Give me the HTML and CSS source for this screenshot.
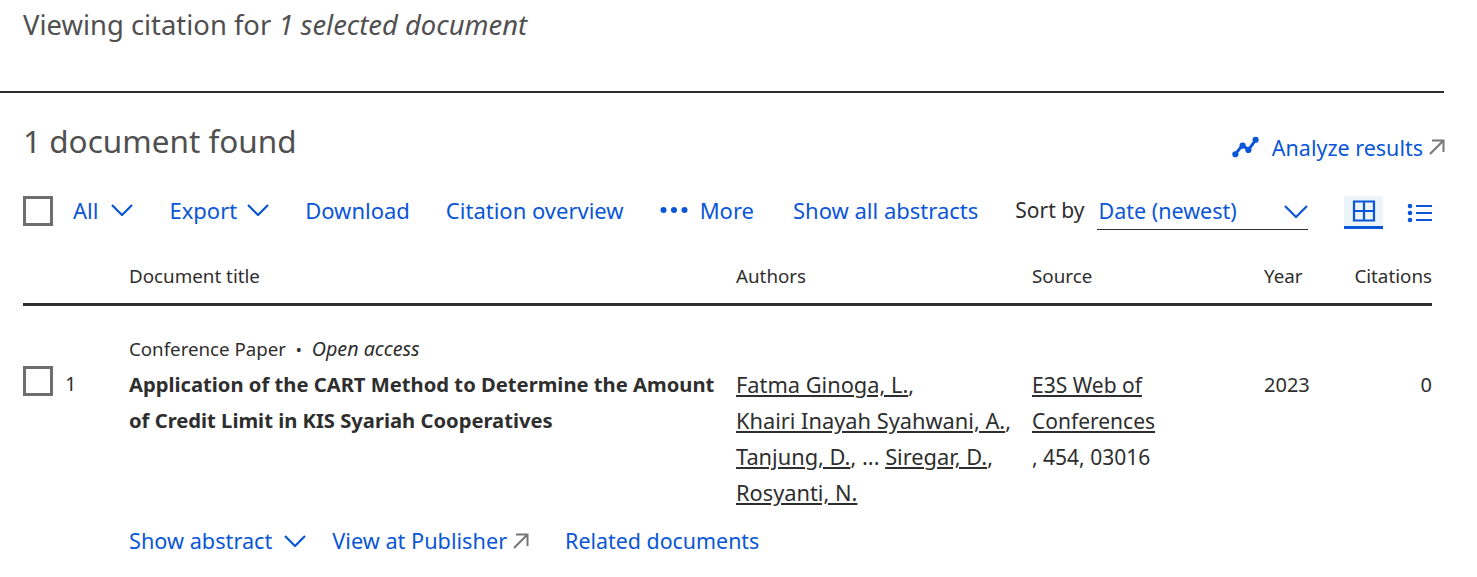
FILE: index.html
```html
<!DOCTYPE html>
<html lang="en">
<head>
    <meta charset="UTF-8">
    <title>Scopus - Document search results</title>
    <link rel="stylesheet" href="styles.css">
</head>
<body>
    <div class="viewing">Viewing citation for <em>1 selected document</em></div>

    <div class="results">
        <div class="results-head">
            <h1>1 document found</h1>
            <a href="#" class="analyze">
                <svg class="ico-analyze" width="27" height="24" viewBox="0 0 28 24"><path d="M3 20 L11 10 L17 15 L25 4" fill="none" stroke="#0a56d8" stroke-width="3"/><circle cx="3.5" cy="19.5" r="3.2" fill="#0a56d8"/><circle cx="11" cy="10.5" r="3.2" fill="#0a56d8"/><circle cx="17" cy="15" r="3.2" fill="#0a56d8"/><circle cx="24.5" cy="4.5" r="3.2" fill="#0a56d8"/></svg>
                <span>Analyze results</span>
                <svg class="ico-out" width="16" height="16" viewBox="0 0 16 16"><path d="M1 15 L14.5 1.5 M3 1.5 H14.5 V13" fill="none" stroke="#767676" stroke-width="2"/></svg>
            </a>
        </div>

        <div class="toolbar">
            <span class="checkbox"></span>
            <a href="#" class="tool t-all">All <svg class="chev" width="22" height="12" viewBox="0 0 22 12"><path d="M1 1 L11 11 L21 1" fill="none" stroke="#0a56d8" stroke-width="2.2"/></svg></a>
            <a href="#" class="tool t-export">Export <svg class="chev" width="22" height="12" viewBox="0 0 22 12"><path d="M1 1 L11 11 L21 1" fill="none" stroke="#0a56d8" stroke-width="2.2"/></svg></a>
            <a href="#" class="tool t-download">Download</a>
            <a href="#" class="tool t-overview">Citation overview</a>
            <a href="#" class="tool t-more"><svg width="28" height="8" viewBox="0 0 28 8"><circle cx="3.5" cy="4" r="3" fill="#0a56d8"/><circle cx="14" cy="4" r="3" fill="#0a56d8"/><circle cx="24.5" cy="4" r="3" fill="#0a56d8"/></svg> More</a>
            <a href="#" class="tool t-abstracts">Show all abstracts</a>
            <span class="sort-label">Sort by</span>
            <div class="sort-select">
                <span>Date (newest)</span>
                <svg width="24" height="13" viewBox="0 0 24 13"><path d="M1 1 L12 12 L23 1" fill="none" stroke="#0a56d8" stroke-width="2.2"/></svg>
            </div>
            <div class="view-btn active">
                <svg width="24" height="22" viewBox="0 0 24 22"><path d="M2 1.5 H22 V20.5 H2 Z M12 1.5 V20.5 M2 11 H22" fill="none" stroke="#0a56d8" stroke-width="2.2"/></svg>
            </div>
            <div class="view-btn">
                <svg width="26" height="20" viewBox="0 0 26 20"><circle cx="3" cy="3" r="2.3" fill="#0a56d8"/><circle cx="3" cy="10" r="2.3" fill="#0a56d8"/><circle cx="3" cy="17" r="2.3" fill="#0a56d8"/><path d="M9 3 H25 M9 10 H25 M9 17 H25" stroke="#0a56d8" stroke-width="2.2"/></svg>
            </div>
        </div>

        <div class="row table-head">
            <div></div>
            <div>Document title</div>
            <div>Authors</div>
            <div>Source</div>
            <div>Year</div>
            <div class="right">Citations</div>
        </div>

        <div class="doc-meta">Conference Paper <span class="dot">•</span> <em>Open access</em></div>
        <div class="row doc">
            <div class="doc-num"><span class="checkbox"></span><span>1</span></div>
            <div class="doc-title">Application of the CART Method to Determine the Amount of Credit Limit in KIS Syariah Cooperatives</div>
            <div class="authors"><a href="#">Fatma Ginoga, L.</a>,<br><a href="#">Khairi Inayah Syahwani, A.</a>,<br><a href="#">Tanjung, D.</a>, ... <a href="#">Siregar, D.</a>,<br><a href="#">Rosyanti, N.</a></div>
            <div class="source"><a href="#">E3S Web of<br>Conferences</a><br>, 454, 03016</div>
            <div class="year">2023</div>
            <div class="right year">0</div>
        </div>

        <div class="doc-links">
            <a href="#" class="l-abstract">Show abstract <svg class="chev" width="22" height="12" viewBox="0 0 22 12"><path d="M1 1 L11 11 L21 1" fill="none" stroke="#0a56d8" stroke-width="2.2"/></svg></a>
            <a href="#" class="l-publisher">View at Publisher <svg width="16" height="16" viewBox="0 0 16 16"><path d="M1 15 L14.5 1.5 M3 1.5 H14.5 V13" fill="none" stroke="#767676" stroke-width="2"/></svg></a>
            <a href="#" class="l-related">Related documents</a>
        </div>
    </div>
</body>
</html>
```

FILE: styles.css
```css
body {
    font-family: "Noto Sans", sans-serif;
    color: #2e2e2e;
    background-color: #fff;
    margin: 0;
    height: 577px;
    overflow: hidden;
}

a {
    color: #0a56d8;
    text-decoration: none;
}

/* Top line */
.viewing {
    box-sizing: border-box;
    width: 1444px;
    height: 93px;
    padding: 7px 0 0 23px;
    font-size: 27.4px;
    line-height: 36px;
    color: #505050;
    border-bottom: 2px solid #2e2e2e;
}

.results {
    width: 1409px;
    padding: 0 0 0 23px;
}

/* Heading */
.results-head {
    height: 103px;
    display: flex;
    justify-content: space-between;
}

.results-head h1 {
    margin: 25px 0 0;
    font-size: 31.5px;
    line-height: 46px;
    font-weight: 400;
    color: #505050;
}

.analyze {
    display: flex;
    align-items: center;
    height: 30px;
    margin: 39px -13px 0 0;
    font-size: 21.5px;
}

.ico-analyze { margin-right: 13px; }
.ico-out { margin-left: 6px; }

/* Toolbar */
.toolbar {
    height: 61px;
    display: flex;
    align-items: flex-start;
    font-size: 22px;
    line-height: 28px;
}

.checkbox {
    display: block;
    width: 30px;
    height: 30px;
    box-sizing: border-box;
    border: 3px solid #6e6e6e;
    flex: none;
}

.tool { white-space: nowrap; display: flex; align-items: center; }
.tool svg { margin-left: 13px; }
.t-all { margin-left: 20px; }
.t-export { margin-left: 36px; }
.t-export svg { margin-left: 10px; }
.t-download { margin-left: 36px; }
.t-overview { margin-left: 36px; }
.t-more { margin-left: 36px; }
.t-more svg { margin: 0 12px 0 0; }
.t-abstracts { margin-left: 39px; }

.sort-label {
    margin-left: 37px;
    color: #2e2e2e;
    font-size: 21px;
    white-space: nowrap;
}

.sort-select {
    margin-left: 13px;
    width: 211px;
    height: 34px;
    box-sizing: border-box;
    border-bottom: 1px solid #2e2e2e;
    padding: 0 0 3px 1px;
    display: flex;
    justify-content: space-between;
    align-items: center;
    color: #0a56d8;
    font-size: 21.5px;
    flex: none;
}

.view-btn {
    width: 39px;
    height: 33px;
    box-sizing: border-box;
    display: flex;
    align-items: center;
    justify-content: center;
    margin-left: 36px;
    flex: none;
}

.view-btn.active {
    background-color: #ecf3f9;
    border-bottom: 3px solid #0a56d8;
}

.view-btn:last-child { margin-left: 17px; }

/* Table */
.row {
    display: grid;
    grid-template-columns: 106px 607px 296px 232px 70px 98px;
}

.table-head {
    font-size: 18.8px;
    line-height: 24px;
    height: 49px;
    box-sizing: border-box;
    padding-top: 7px;
    border-bottom: 3px solid #2e2e2e;
}

.right { text-align: right; }

.doc-meta {
    margin: 30px 0 0 106px;
    font-size: 18.7px;
    line-height: 26px;
}

.doc-meta em { font-size: 19.7px; }

.dot { margin: 0 5px; font-size: 16px; }

.doc {
    font-size: 20px;
    line-height: 36px;
    margin-top: 3px;
}

.doc-num {
    display: flex;
    gap: 12px;
}

.doc-num .checkbox { margin-top: 0; }

.doc-title {
    font-weight: 700;
    font-size: 20.2px;
    padding-right: 10px;
}

.authors { font-size: 21.8px; margin-top: 1px; }
.source { font-size: 21px; margin-top: 1px; }
.year { margin-top: 1px; }

.authors a,
.source a {
    color: #2e2e2e;
    text-decoration: underline;
}

/* Links under the row */
.doc-links {
    margin: 0 0 0 106px;
    padding-top: 12px;
    display: flex;
    font-size: 21.7px;
    line-height: 36px;
}

.doc-links a { display: flex; align-items: center; }
.doc-links svg { margin-left: 12px; }
.l-abstract { margin-right: 26px; }
.l-publisher { margin-right: 36px; }
.l-publisher svg { margin-left: 6px; }
.l-related { font-size: 21.4px; }
```
